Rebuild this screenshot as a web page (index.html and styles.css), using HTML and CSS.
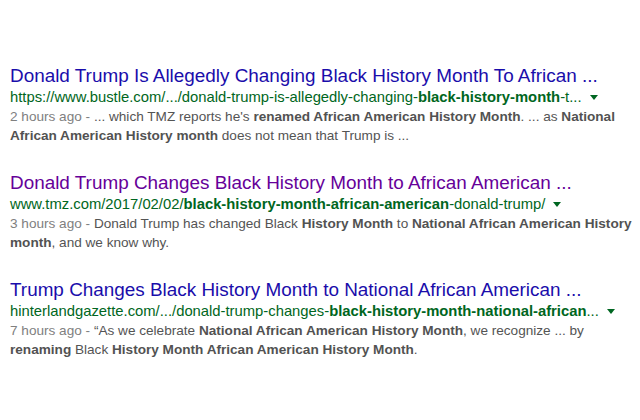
FILE: index.html
```html
<!DOCTYPE html>
<html>
<head>
<meta charset="utf-8">
<link rel="stylesheet" href="styles.css">
</head>
<body>
<div class="results">
  <div class="result">
    <a class="title">Donald Trump Is Allegedly Changing Black History Month To African ...</a>
    <div class="url">https://www.bustle.com/.../donald-trump-is-allegedly-changing-<b>black-history-month</b>-t... <span class="caret"></span></div>
    <div class="snippet"><span class="date">2 hours ago - </span>... which TMZ reports he's <b>renamed African American History Month</b>. ... as <b>National African American History month</b> does not mean that Trump is ...</div>
  </div>
  <div class="result">
    <a class="title visited">Donald Trump Changes Black History Month to African American ...</a>
    <div class="url">www.tmz.com/2017/02/02/<b>black-history-month-african-american</b>-donald-trump/ <span class="caret"></span></div>
    <div class="snippet"><span class="date">3 hours ago - </span>Donald Trump has changed Black <b>History Month</b> to <b>National African American History month</b>, and we know why.</div>
  </div>
  <div class="result">
    <a class="title">Trump Changes Black History Month to National African American ...</a>
    <div class="url">hinterlandgazette.com/.../donald-trump-changes-<b>black-history-month-national-african</b>... <span class="caret"></span></div>
    <div class="snippet"><span class="date">7 hours ago - </span>“As we celebrate <b>National African American History Month</b>, we recognize ... by <b>renaming</b> Black <b>History Month African American History Month</b>.</div>
  </div>
</div>
</body>
</html>
```
FILE: styles.css
```css
html, body {
  margin: 0;
  padding: 0;
  background: #fff;
}
body {
  font-family: "Liberation Sans", Arial, sans-serif;
}
.results {
  padding: 65px 0 0 10px;
  width: 630px;
}
.result {
  margin-bottom: 27px;
}
.title {
  display: block;
  font-size: 18.9px;
  line-height: 22px;
  color: #1a0dab;
  white-space: nowrap;
}
.title.visited {
  color: #660099;
}
.url {
  font-size: 14.8px;
  line-height: 20px;
  color: #006621;
  white-space: nowrap;
}
.url b {
  font-weight: bold;
}
.caret {
  display: inline-block;
  width: 0;
  height: 0;
  border-left: 4px solid transparent;
  border-right: 4px solid transparent;
  border-top: 5px solid #006621;
  margin-left: 4px;
  vertical-align: 2px;
}
.snippet {
  font-size: 13.6px;
  line-height: 19px;
  color: #545454;
}
.snippet b {
  color: #525252;
}
.date {
  color: #808080;
}
```
